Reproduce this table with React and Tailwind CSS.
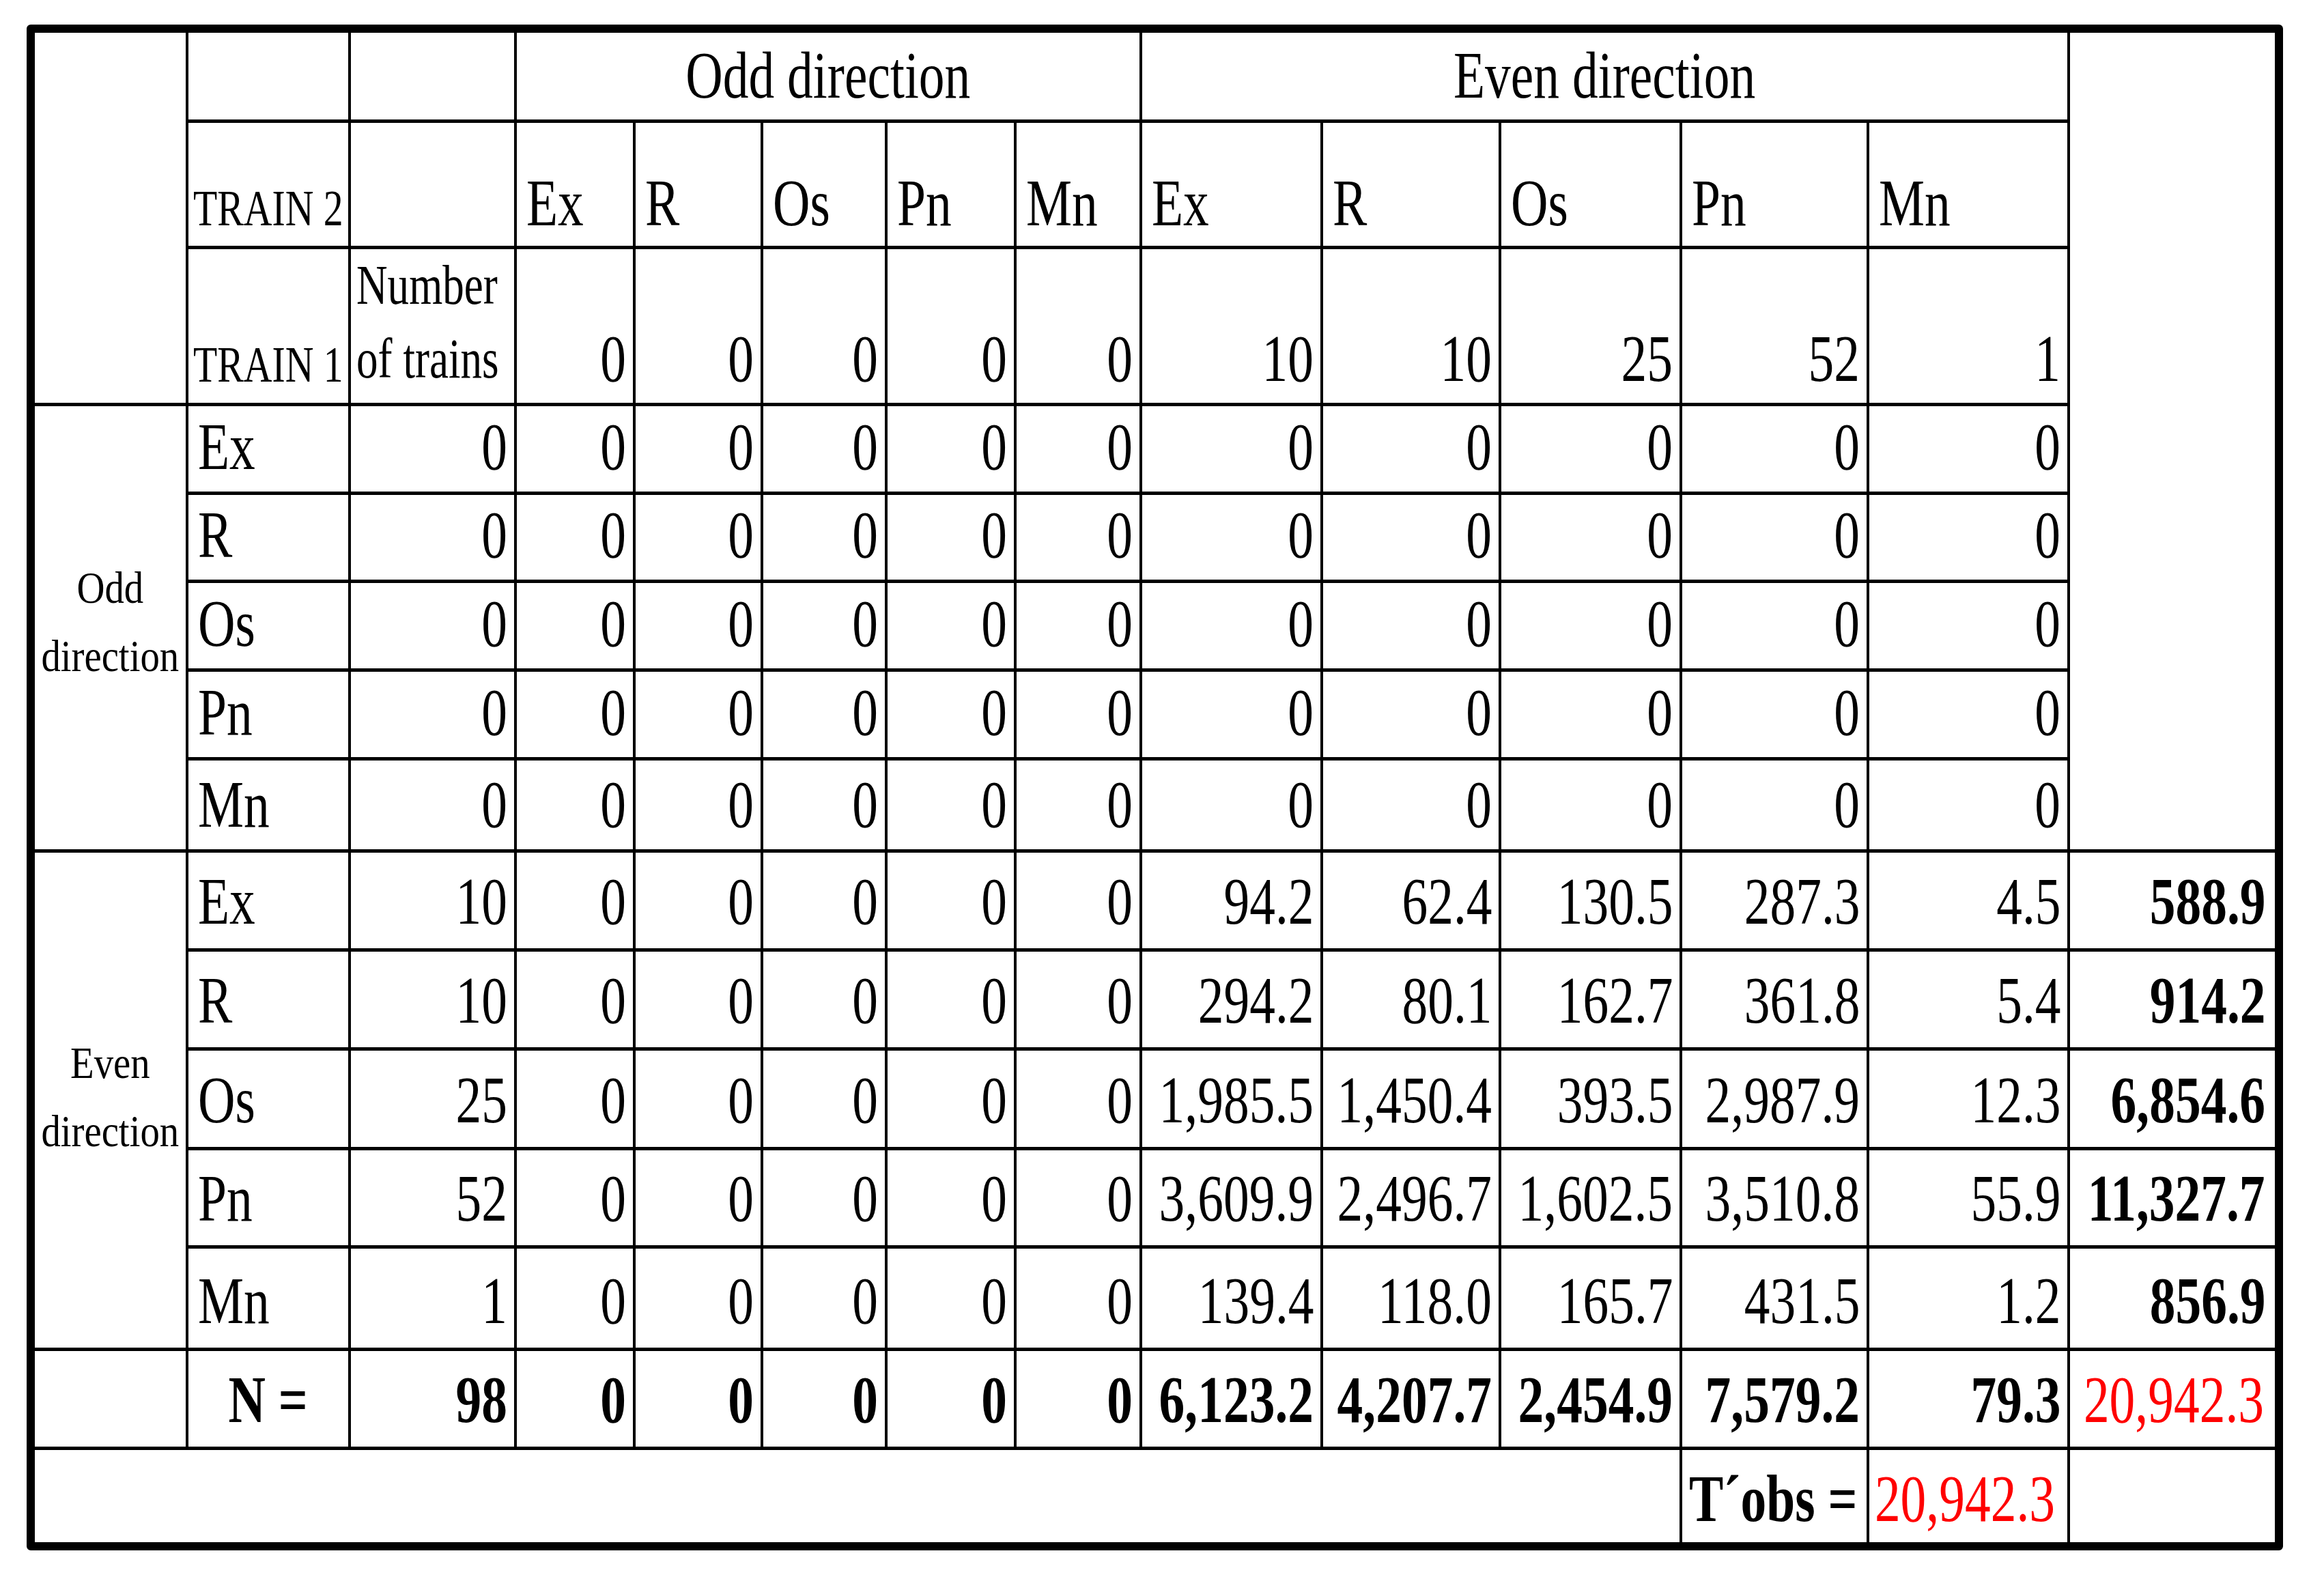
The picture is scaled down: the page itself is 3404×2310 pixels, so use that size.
import React from "react";

const B = "border-r-4 border-b-[5px] border-black";
const labels = ["Ex", "R", "Os", "Pn", "Mn"];

function Num({ children, bold, red }) {
  return (
    <span
      className={`inline-block origin-right scale-x-[0.77] whitespace-nowrap text-[98px] leading-none ${
        bold ? "font-bold" : "font-normal"
      } ${red ? "text-[#ff0000]" : "text-black"}`}
    >
      {children}
    </span>
  );
}

function Lbl({ children, bold }) {
  return (
    <span
      className={`inline-block origin-left scale-x-[0.77] whitespace-nowrap text-[98px] leading-none ${
        bold ? "font-bold" : "font-normal"
      }`}
    >
      {children}
    </span>
  );
}

function Ctr({ children, bold }) {
  return (
    <span
      className={`inline-block origin-center scale-x-[0.77] whitespace-nowrap text-[98px] leading-none ${
        bold ? "font-bold" : "font-normal"
      }`}
    >
      {children}
    </span>
  );
}

const evenRows = [
  { l: "Ex", n: "10", v: ["94.2", "62.4", "130.5", "287.3", "4.5"], t: "588.9" },
  { l: "R", n: "10", v: ["294.2", "80.1", "162.7", "361.8", "5.4"], t: "914.2" },
  { l: "Os", n: "25", v: ["1,985.5", "1,450.4", "393.5", "2,987.9", "12.3"], t: "6,854.6" },
  { l: "Pn", n: "52", v: ["3,609.9", "2,496.7", "1,602.5", "3,510.8", "55.9"], t: "11,327.7" },
  { l: "Mn", n: "1", v: ["139.4", "118.0", "165.7", "431.5", "1.2"], t: "856.9" },
];

export default function App() {
  const hdrNums = ["0", "0", "0", "0", "0", "10", "10", "25", "52", "1"];
  return (
    <div className="w-[3404px] h-[2310px] bg-white pl-[39px] pt-[36px] font-['Liberation_Serif','Times_New_Roman',serif] text-black">
      <div className="w-fit border-[12px] border-black rounded-[6px]">
        <div className="grid grid-cols-[225px_238px_243px_174px_187px_182px_189px_184px_265px_261px_265px_274px_294px_300px] grid-rows-[132px_185px_230px_130px_129px_130px_130px_135px_145px_145px_146px_144px_150px_145px_135px]">
          {/* Row 0 */}
          <div className={`row-span-3 ${B}`} />
          <div className={B} />
          <div className={B} />
          <div className={`col-span-5 flex items-end justify-center pb-[16px] ${B}`}>
            <Ctr>Odd direction</Ctr>
          </div>
          <div className={`col-span-5 flex items-end justify-center pb-[16px] ${B}`}>
            <Ctr>Even direction</Ctr>
          </div>
          <div className="row-span-8 border-b-[5px] border-black" />

          {/* Row 1 */}
          <div className={`flex items-end pl-[7px] pb-[18px] ${B}`}>
            <span className="inline-block origin-left scale-x-[0.78] whitespace-nowrap text-[74px] leading-none">
              TRAIN 2
            </span>
          </div>
          <div className={B} />
          {labels.concat(labels).map((l, i) => (
            <div key={"h" + i} className={`flex items-end pl-[14px] pb-[14px] ${B}`}>
              <Lbl>{l}</Lbl>
            </div>
          ))}

          {/* Row 2 */}
          <div className={`flex items-end pl-[7px] pb-[19px] ${B}`}>
            <span className="inline-block origin-left scale-x-[0.78] whitespace-nowrap text-[74px] leading-none">
              TRAIN 1
            </span>
          </div>
          <div className={`flex items-end pl-[8px] pb-[10px] ${B}`}>
            <span className="inline-block origin-left scale-x-[0.77] whitespace-nowrap text-[82px] leading-[108px]">
              Number
              <br />
              of trains
            </span>
          </div>
          {hdrNums.map((n, i) => (
            <div key={"n" + i} className={`flex items-end justify-end pr-[10px] pb-[16px] ${B}`}>
              <Num>{n}</Num>
            </div>
          ))}

          {/* Odd rows */}
          {labels.map((l, r) => (
            <React.Fragment key={"o" + r}>
              {r === 0 && (
                <div className={`row-span-5 flex items-center justify-center pb-[18px] ${B}`}>
                  <span className="inline-block origin-center scale-x-[0.86] text-center text-[66px] leading-[100px] whitespace-nowrap">
                    Odd
                    <br />
                    direction
                  </span>
                </div>
              )}
              <div className={`flex items-end pl-[14px] pb-[17px] ${B}`}>
                <Lbl>{l}</Lbl>
              </div>
              {Array.from({ length: 11 }).map((_, i) => (
                <div key={i} className={`flex items-end justify-end pr-[10px] pb-[17px] ${B}`}>
                  <Num>0</Num>
                </div>
              ))}
            </React.Fragment>
          ))}

          {/* Even rows */}
          {evenRows.map((row, r) => (
            <React.Fragment key={"e" + r}>
              {r === 0 && (
                <div className={`row-span-5 flex items-center justify-center pb-[10px] ${B}`}>
                  <span className="inline-block origin-center scale-x-[0.86] text-center text-[66px] leading-[100px] whitespace-nowrap">
                    Even
                    <br />
                    direction
                  </span>
                </div>
              )}
              <div className={`flex items-end pl-[14px] pb-[20px] ${B}`}>
                <Lbl>{row.l}</Lbl>
              </div>
              <div className={`flex items-end justify-end pr-[10px] pb-[20px] ${B}`}>
                <Num>{row.n}</Num>
              </div>
              {Array.from({ length: 5 }).map((_, i) => (
                <div key={"z" + i} className={`flex items-end justify-end pr-[10px] pb-[20px] ${B}`}>
                  <Num>0</Num>
                </div>
              ))}
              {row.v.map((v, i) => (
                <div key={"v" + i} className={`flex items-end justify-end pr-[10px] pb-[20px] ${B}`}>
                  <Num>{v}</Num>
                </div>
              ))}
              <div className="flex items-end justify-end pr-[14px] pb-[20px] border-b-[5px] border-black">
                <Num bold>{row.t}</Num>
              </div>
            </React.Fragment>
          ))}

          {/* N row */}
          <div className={B} />
          <div className={`flex items-end justify-center pb-[20px] ${B}`}>
            <Ctr bold>N =</Ctr>
          </div>
          {["98", "0", "0", "0", "0", "0", "6,123.2", "4,207.7", "2,454.9", "7,579.2", "79.3"].map((v, i) => (
            <div key={"N" + i} className={`flex items-end justify-end pr-[10px] pb-[20px] ${B}`}>
              <Num bold>{v}</Num>
            </div>
          ))}
          <div className="flex items-end justify-end pr-[16px] pb-[20px] border-b-[5px] border-black">
            <Num red>20,942.3</Num>
          </div>

          {/* T'obs row */}
          <div className="col-span-11 border-r-4 border-black" />
          <div className="flex items-end pl-[10px] pb-[15px] border-r-4 border-black">
            <Lbl bold>T´obs =</Lbl>
          </div>
          <div className="flex items-end justify-end pr-[18px] pb-[15px] border-r-4 border-black">
            <Num red>20,942.3</Num>
          </div>
          <div />
        </div>
      </div>
    </div>
  );
}
